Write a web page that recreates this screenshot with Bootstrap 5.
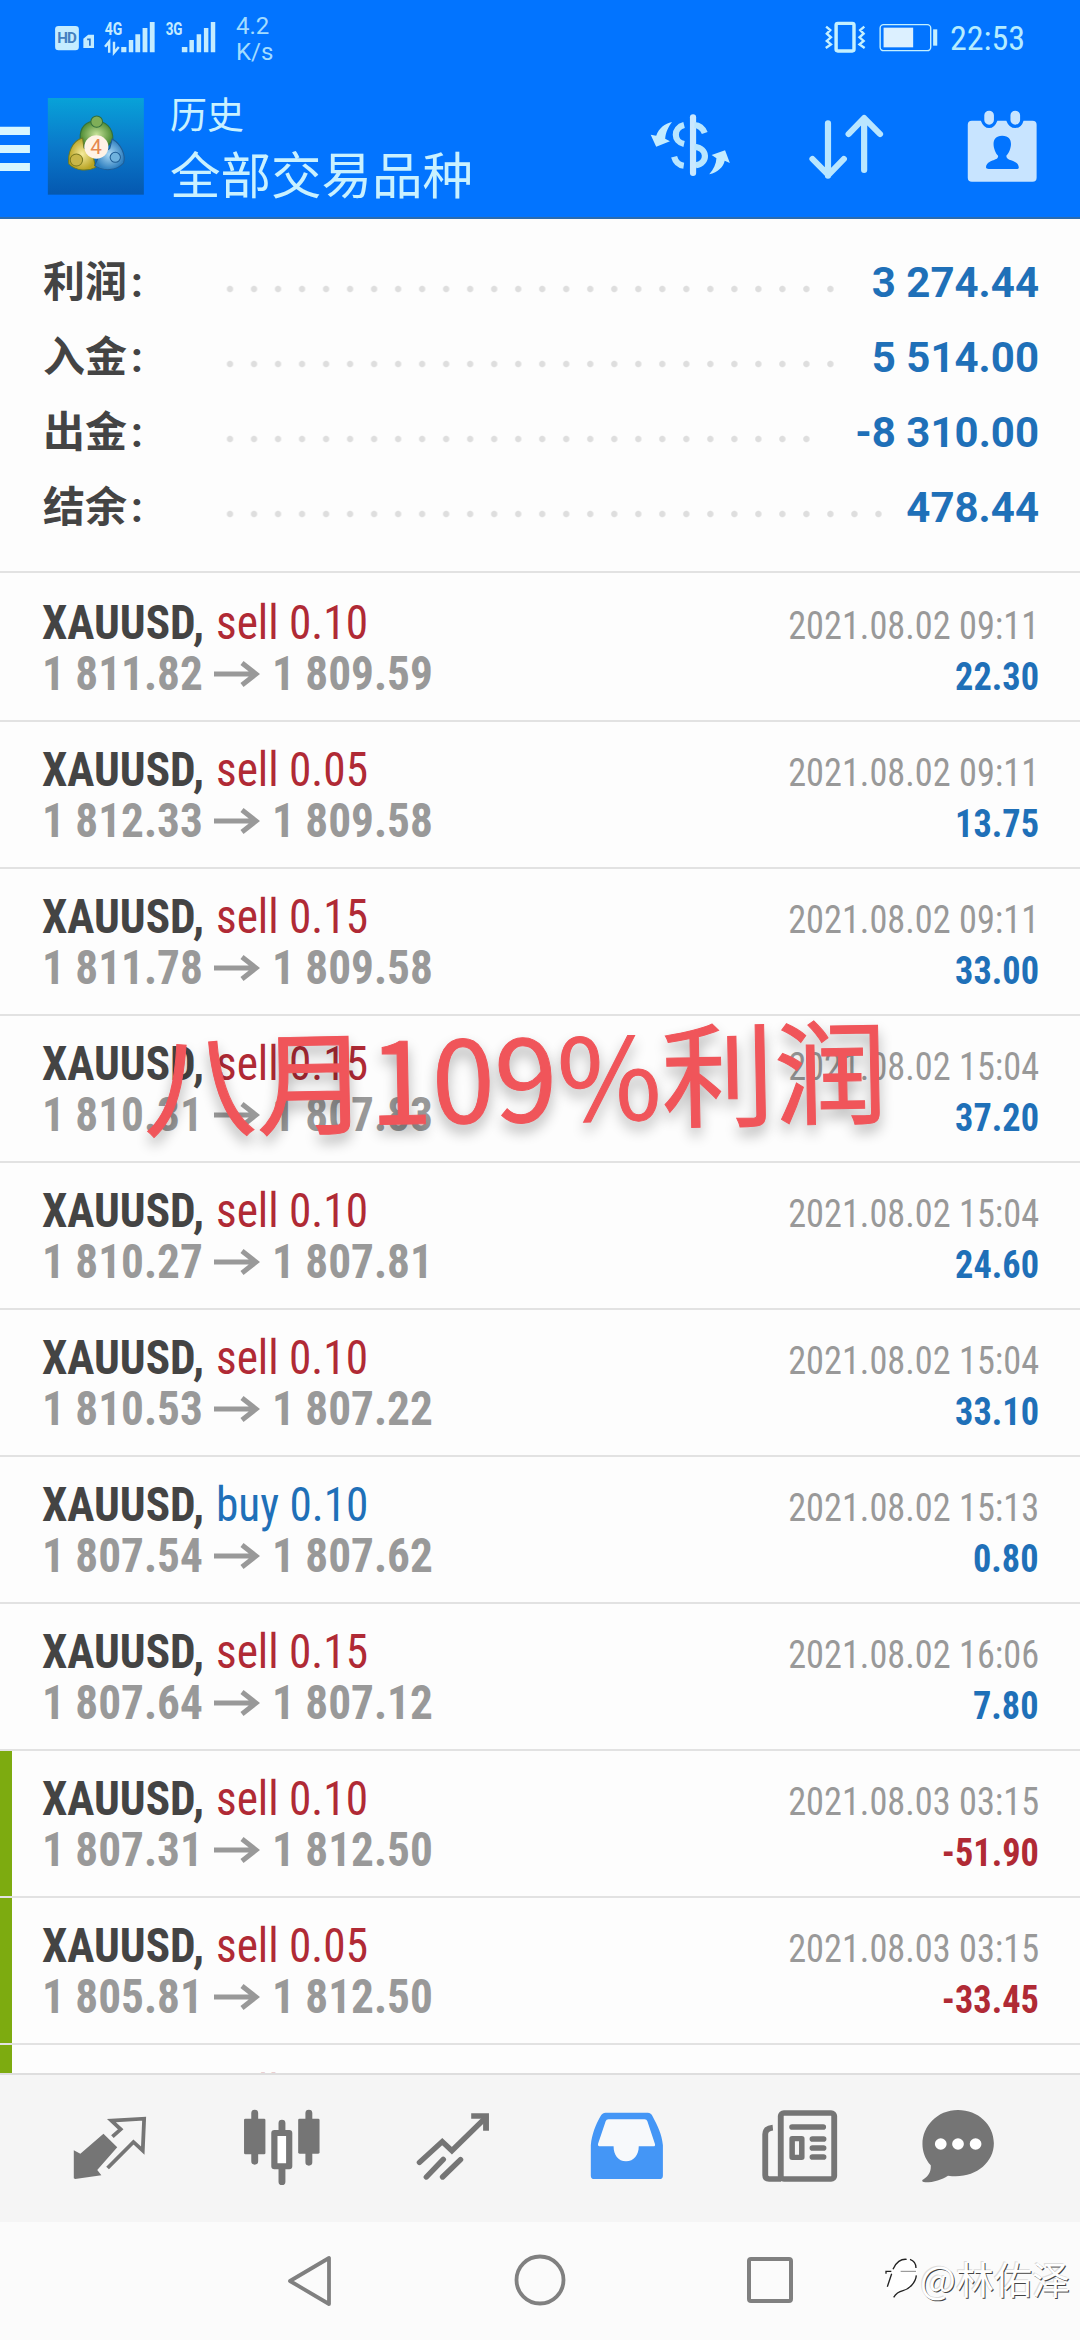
<!DOCTYPE html>
<html lang="zh-CN">
<head>
<meta charset="utf-8">
<meta name="viewport" content="width=device-width, initial-scale=1">
<title>历史</title>
<link href="https://cdn.jsdelivr.net/npm/bootstrap@5.3.0/dist/css/bootstrap.min.css" rel="stylesheet">
<style>
body{width:1080px;height:2340px;overflow:hidden;background:#fdfdfd;font-family:Roboto,"Noto Sans CJK SC",sans-serif;color:#444}
svg{display:block;flex:none}
.app-top{height:219px;background:#0274ff;border-bottom:2px solid #2b6cb0;color:#c9f1ff}
.status{height:76px;padding:0 55px 0 52px}
.net{font-size:24px;line-height:26px;color:#a3dcff;padding-top:13px}
.clock{font-family:"Roboto Condensed",Roboto;font-size:34px;line-height:40px;color:#b5ecff;padding-top:18px;margin-left:10px}
.tools{height:141px}
.ttl1{font-size:37px;line-height:44px;padding-top:19px}
.ttl2{font-size:50.5px;line-height:60px;margin-top:8px}
.summary{height:352px;padding-top:26px}
.sumrow{height:75px;padding:0 41px 0 43px;font-size:42px;line-height:75px;font-weight:700}
.sumlabel{width:175px}
.leader{height:8px;margin-top:13px;background:radial-gradient(circle,#dedede 0 2.6px,transparent 3.8px) 0 0/24.03px 8px repeat-x}
.l25{width:601px}.l26{width:625px}.l28{width:673px}
.pos{color:#1f70b8}.neg{color:#b02a35}
.deal{height:147px;border-top:2px solid #e2e2e2;padding:22px 41px 0 42px;font-family:"Roboto Condensed",Roboto;flex:none}
.deal:first-child{height:149px;padding-top:24px}
.win{height:1502px;overflow:hidden}
.tagged{background:linear-gradient(#7dab10,#7dab10) left/12px 100% no-repeat}
.ln{height:51px;line-height:51px;font-size:48px;white-space:nowrap}
.ln>span{transform:scaleX(.943);transform-origin:left}
.ln>.ms-auto{transform-origin:right}
.sm{font-size:38.5px}
.sym{font-weight:700;width:174px}
.px{font-weight:700;color:#999}
.when{color:#999}
.p1{width:172px}.p2{margin-left:12px}
.slogan{left:143px;top:993px;font-size:113px;line-height:160px;white-space:nowrap;color:#f0555a;transform:rotate(-1.1deg);-webkit-text-stroke:1px #f0555a;text-shadow:0 8px 14px rgba(0,0,0,.32);font-family:"Noto Sans CJK SC",sans-serif}
.tabs{height:149px;background:#f5f5f5;border-top:2px solid #dedede;padding-left:24px;color:#757575}
.tab{width:172.5px}.tab:last-child{width:143px}
.sysnav{height:118px;background:#fbfbfb}
.key{width:230px}
.wm{right:10px;bottom:34px;font-size:38px;line-height:56px;color:#fff;text-shadow:1px 1px 0 #444,-1px -1px 0 #ddd;font-family:"Noto Sans CJK SC",sans-serif}
</style>
</head>
<body class="position-relative d-flex flex-column">
<header class="app-top flex-shrink-0">
  <div class="status d-flex align-items-start">
    <svg width="176" height="76" viewBox="151 0 511 228" preserveAspectRatio="none" fill="#c4ecff">
      <rect x="160" y="78" width="69" height="73" rx="10"/>
      <text x="166" y="130" font-family="Roboto" font-weight="700" font-size="44" textLength="57" fill="#4380c0">HD</text>
      <path d="M242 116l14-12h17v40h-31z"/><path d="M253 118h8v19" stroke="#2b78d0" stroke-width="5" fill="none"/>
      <text x="304" y="106" font-family="Roboto" font-weight="700" font-size="54" textLength="51" lengthAdjust="spacingAndGlyphs">4G</text>
      <text x="481" y="106" font-family="Roboto" font-weight="700" font-size="54" textLength="49" lengthAdjust="spacingAndGlyphs">3G</text>
      <path d="M305 140l12-15v33M331 125v33l14-17" fill="none" stroke="#c4ecff" stroke-width="7"/>
      <path d="M352 141h15v16h-15zM374 120h13v37h-13zM393 103h14v54h-14zM414 84h14v73h-14zM435 66h14v91h-14z"/>
      <path d="M528 141h16v16h-16zM550 120h13v37h-13zM571 103h13v54h-13zM592 84h13v73h-13zM612 66h13v91h-13z"/>
    </svg>
    <div class="net ms-2">4.2<br>K/s</div>
    <svg class="ms-auto" width="118" height="76" viewBox="823 0 343 228" preserveAspectRatio="none" fill="none" stroke="#c4f0ff">
      <rect x="864" y="70" width="52" height="83" rx="5" stroke-width="10"/>
      <path d="M835 80l12 10-10 11 12 11-12 11 12 10-15 11M946 80l-12 10 10 11-12 11 12 11-12 10 15 11" stroke-width="7"/>
      <rect x="992" y="74" width="147" height="78" rx="10" stroke-width="4"/>
      <rect x="1002" y="83" width="86" height="59" fill="#dcf0ff" stroke="none"/>
      <path d="M1152 88v49" stroke-width="12"/>
    </svg>
    <div class="clock">22:53</div>
  </div>
  <div class="tools d-flex">
    <svg width="170" height="141" viewBox="0 228 494 423" preserveAspectRatio="none">
      <defs>
        <linearGradient id="sky" x1="0" y1="0" x2="0" y2="1"><stop offset="0" stop-color="#08a2d8"/><stop offset=".5" stop-color="#0a79cb"/><stop offset="1" stop-color="#0558b0"/></linearGradient>
        <radialGradient id="gn"><stop offset="0" stop-color="#c8e39a"/><stop offset="1" stop-color="#4d8a32"/></radialGradient>
        <radialGradient id="yl"><stop offset="0" stop-color="#f6ec9d"/><stop offset="1" stop-color="#b9a424"/></radialGradient>
        <radialGradient id="bl"><stop offset="0" stop-color="#aedbf5"/><stop offset="1" stop-color="#2e7fc0"/></radialGradient>
      </defs>
      <path d="M0 380h87v25H0zM0 435h87v24H0zM0 489h87v24H0z" fill="#d8f7ff"/>
      <rect x="139" y="294" width="279" height="290" fill="url(#sky)"/>
      <path d="M233 418c-2-40 20-55 46-55s50 18 49 57l-20 24h-58z" fill="url(#gn)" stroke="#326f3c" stroke-width="3"/>
      <circle cx="281" cy="365" r="17" fill="#7fae58" stroke="#326f3c" stroke-width="3"/>
      <path d="M240 414c-30 8-44 45-40 78 22 22 56 22 78 10l-8-36-26-22z" fill="url(#yl)" stroke="#6c7a24" stroke-width="3"/>
      <circle cx="222" cy="480" r="18" fill="#c8b648" stroke="#7c7a20" stroke-width="3"/>
      <path d="M326 417c27 16 40 48 33 72-20 24-58 26-84 8l14-32 30-20z" fill="url(#bl)" stroke="#1f5d95" stroke-width="3"/>
      <circle cx="335" cy="472" r="15" fill="#6fb2de" stroke="#1f5d95" stroke-width="3"/>
      <circle cx="280" cy="441" r="35" fill="#fff3e6"/>
      <text x="262" y="463" font-family="Roboto" font-size="60" fill="#e5874f">4</text>
    </svg>
    <div>
      <div class="ttl1">历史</div>
      <div class="ttl2">全部交易品种</div>
    </div>
    <svg class="ms-auto" width="430" height="141" viewBox="319 228 1249 423" preserveAspectRatio="none" fill="none" stroke="#b9e6ff" stroke-linecap="round" stroke-linejoin="round">
      <path d="M444 352v167" stroke-width="18" stroke="#c9e8ff"/>
      <path d="M418 375c-32 8-32 50 0 57M389 470c4 15 14 25 28 27M448 375c14 1 24 9 30 24M448 440c40 4 40 50 4 56" stroke-width="18" stroke-linecap="butt"/>
      <path d="M383 366c-21 4-38 19-46 41l-16-3 16 36 40-16-14-8c2-21 10-36 20-50zM491 523c26-7 41-22 45-41l15 7-14-38-39 14 14 10c-1 17-8 33-21 48z" fill="#c4ecff" stroke="none"/>
      <path d="M836 370v157M791 477l46 48 45-48M941 510V355M896 402l45-48 46 48" stroke-width="18"/>
      <path d="M1254 362h26q8 22 24 22t24-22h26q8 22 26 22t24-22h26q12 0 12 12v159q0 12-12 12h-176q-12 0-12-12V374q0-12 12-12z" fill="#c8e4ff" stroke="none"/>
      <path d="M1304 346v14M1380 346v14" stroke="#c8e4ff" stroke-width="28"/>
      <path d="M1342 407c-38 0-25 47-12 60 3 17-32 10-35 35 0 4 3 5 8 5h80c5 0 8-2 7-6-3-24-37-16-36-34 14-14 26-60-12-60z" fill="#0274ff" stroke="none"/>
    </svg>
  </div>
</header>

<section class="summary flex-shrink-0">
  <div class="sumrow d-flex align-items-center"><span class="sumlabel">利润<span class="ps-1">:</span></span><span class="leader l26"></span><span class="pos ms-auto">3 274.44</span></div>
  <div class="sumrow d-flex align-items-center"><span class="sumlabel">入金<span class="ps-1">:</span></span><span class="leader l26"></span><span class="pos ms-auto">5 514.00</span></div>
  <div class="sumrow d-flex align-items-center"><span class="sumlabel">出金<span class="ps-1">:</span></span><span class="leader l25"></span><span class="pos ms-auto">-8 310.00</span></div>
  <div class="sumrow d-flex align-items-center"><span class="sumlabel">结余<span class="ps-1">:</span></span><span class="leader l28"></span><span class="pos ms-auto">478.44</span></div>
</section>

<main class="win d-flex flex-column flex-shrink-0" id="deals"></main>

<nav class="tabs d-flex align-items-center flex-shrink-0">
  <div class="tab d-flex justify-content-center"><svg width="90" height="90" viewBox="189.5 159 261 270" preserveAspectRatio="none">
    <path d="M301 248l40 41-58 68 12 16-76 11-4-2v-84l19 10z" fill="#757575"/>
    <path d="M327 257l24-22-27-26 95-6-4 96-27-26-75 78" fill="none" stroke="#757575" stroke-width="11"/></svg></div>
  <div class="tab d-flex justify-content-center"><svg width="90" height="90" viewBox="690.5 159 261 270" preserveAspectRatio="none">
    <path d="M739 186v145M896 186v148M818 216v22M818 352v40" stroke="#757575" stroke-width="20" stroke-linecap="round"/>
    <rect x="708" y="203" width="62" height="107" rx="4" fill="#757575"/><rect x="865" y="203" width="62" height="105" rx="4" fill="#757575"/>
    <rect x="796" y="246" width="43" height="100" fill="#fff" stroke="#757575" stroke-width="18" stroke-linejoin="round"/></svg></div>
  <div class="tab d-flex justify-content-center"><svg width="90" height="90" viewBox="1191.5 159 261 270" preserveAspectRatio="none" fill="none" stroke="#757575" stroke-width="16">
    <path d="M1219 334l66-62 28 27 98-99M1239 378l49-53M1286 378l52-52" stroke-linecap="round"/><path d="M1369 195h43v44" stroke-width="17"/></svg></div>
  <div class="tab d-flex justify-content-center"><svg width="90" height="90" viewBox="124.3 159 261 270" preserveAspectRatio="none">
    <path d="M190 185h122q10 0 14 11c14 28 27 53 30 87v91q0 10-10 10H157q-10 0-10-10v-91c3-34 14-61 28-87q5-11 15-11z" fill="#4496f6"/>
    <path d="M198 205h105q6 0 8 6l22 68q2 7-5 7h-42c0 26-14 45-37 45s-36-19-36-45h-38q-9 0-7-8l22-67q2-6 8-6z" fill="#f7f9fb"/></svg></div>
  <div class="tab d-flex justify-content-center"><svg width="90" height="90" viewBox="625.3 159 261 270" preserveAspectRatio="none" fill="none" stroke="#757575" stroke-width="17">
    <rect x="700" y="186" width="155" height="198" rx="9"/><path d="M677 230q-22 2-22 20v123q0 11 11 11h35"/>
    <path d="M733 228h90M792 264h32M792 291h32M792 318h32" stroke-linecap="round"/><rect x="733" y="263" width="28" height="56" stroke-width="16" stroke-linejoin="round"/></svg></div>
  <div class="tab d-flex justify-content-center"><svg width="90" height="90" viewBox="1083.5 159 261 270" preserveAspectRatio="none">
    <path d="M1214 177c58 0 104 44 104 100 0 62-60 109-133 97-18 12-40 20-66 20-12-1-10-7-4-10 15-10 21-23 20-41-56-66-8-166 79-166z" fill="#757575"/>
    <g fill="#fff"><circle cx="1164" cy="279" r="17"/><circle cx="1214" cy="279" r="17"/><circle cx="1265" cy="279" r="17"/></g></svg></div>
</nav>
<div class="sysnav d-flex justify-content-center align-items-center flex-shrink-0">
  <div class="key d-flex justify-content-center"><svg width="56" height="56" viewBox="0 0 56 56"><path d="M47 5v46L8 28z" fill="none" stroke="#808080" stroke-width="3.8" stroke-linejoin="round"/></svg></div>
  <div class="key d-flex justify-content-center"><svg width="56" height="56" viewBox="0 0 56 56"><circle cx="28" cy="27" r="23.5" fill="none" stroke="#808080" stroke-width="3.8"/></svg></div>
  <div class="key d-flex justify-content-center"><svg width="56" height="56" viewBox="0 0 56 56"><rect x="7" y="6" width="42" height="42" rx="2" fill="none" stroke="#808080" stroke-width="4"/></svg></div>
</div>

<div class="slogan position-absolute">八月109%利润</div>
<div class="wm position-absolute d-flex align-items-center">
  <svg width="36" height="44" viewBox="40 50 108 132" fill="none">
    <path d="M62 92C75 62 92 54 112 56c20 4 30 18 28 40 0 30-20 54-44 60l-24 18 10-22H46l14-46z" fill="#fff"/>
    <path d="M67 90C75 68 92 58 108 60M118 60c12 4 18 14 18 26M46 103v-7h16M63 103L50 142M137 108c-2 22-22 42-40 46-12 3-22 10-28 20" stroke="#222" stroke-width="4"/><path d="M90 96h46" stroke="#888" stroke-width="3"/></svg>
  <span>@林佑泽</span>
</div>

<script>
const deals=[
 ["sell 0.10","1 811.82","1 809.59","2021.08.02 09:11","22.30"],
 ["sell 0.05","1 812.33","1 809.58","2021.08.02 09:11","13.75"],
 ["sell 0.15","1 811.78","1 809.58","2021.08.02 09:11","33.00"],
 ["sell 0.15","1 810.31","1 807.83","2021.08.02 15:04","37.20"],
 ["sell 0.10","1 810.27","1 807.81","2021.08.02 15:04","24.60"],
 ["sell 0.10","1 810.53","1 807.22","2021.08.02 15:04","33.10"],
 ["buy 0.10","1 807.54","1 807.62","2021.08.02 15:13","0.80"],
 ["sell 0.15","1 807.64","1 807.12","2021.08.02 16:06","7.80"],
 ["sell 0.10","1 807.31","1 812.50","2021.08.03 03:15","-51.90",1],
 ["sell 0.05","1 805.81","1 812.50","2021.08.03 03:15","-33.45",1],
 ["sell","","","","",1]];
document.getElementById("deals").innerHTML=deals.map(([side,from,to,when,pl,tag])=>`
<article class="deal${tag?" tagged":""}">
  <div class="ln d-flex align-items-baseline"><span class="sym">${when?"XAUUSD,":""}</span><span class="${side[0]==="s"?"neg":"pos"}">${side}</span><span class="when sm ms-auto">${when}</span></div>
  ${when?`<div class="ln px d-flex align-items-baseline"><span class="p1">${from}</span><svg class="align-self-center" width="46" height="28" viewBox="0 0 46 28" fill="none" stroke="#999" stroke-width="5"><path d="M0 14h41M28 3l14 11-14 11"/></svg><span class="p2">${to}</span><span class="sm ms-auto ${pl[0]==="-"?"neg":"pos"}">${pl}</span></div>`:""}
</article>`).join("");
</script>
<script src="https://cdn.jsdelivr.net/npm/bootstrap@5.3.0/dist/js/bootstrap.bundle.min.js"></script>
</body>
</html>
